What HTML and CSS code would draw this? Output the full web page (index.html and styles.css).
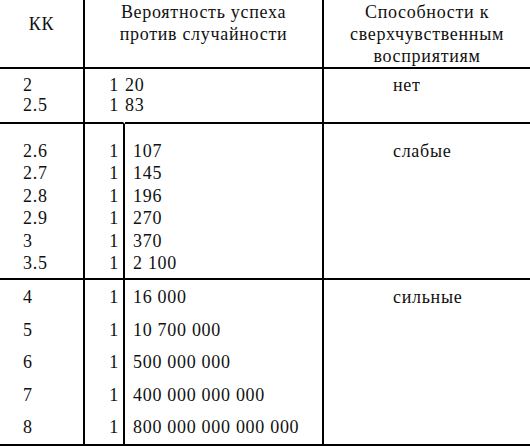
FILE: index.html
```html
<!DOCTYPE html>
<html lang="ru">
<head>
<meta charset="utf-8">
<title>КК</title>
<link rel="stylesheet" href="styles.css">
</head>
<body>
<table class="kk-table">
  <colgroup>
    <col class="c-kk">
    <col class="c-one">
    <col class="c-val">
    <col class="c-abil">
  </colgroup>
  <thead>
    <tr>
      <th class="h-kk">КК</th>
      <th class="h-prob" colspan="2">Вероятность успеха<br>против случайности</th>
      <th class="h-abil">Способности к<br>сверхчувственным<br>восприятиям</th>
    </tr>
  </thead>
  <tbody>
    <tr class="r1">
      <td class="kk">2<br>2.5</td>
      <td class="one one-plain">1<br>1</td>
      <td class="val val-plain">20<br>83</td>
      <td class="abil">нет</td>
    </tr>
    <tr class="r2">
      <td class="kk">2.6<br>2.7<br>2.8<br>2.9<br>3<br>3.5</td>
      <td class="one">1<br>1<br>1<br>1<br>1<br>1</td>
      <td class="val">107<br>145<br>196<br>270<br>370<br>2 100</td>
      <td class="abil">слабые</td>
    </tr>
    <tr class="r3">
      <td class="kk">4<br>5<br>6<br>7<br>8</td>
      <td class="one">1<br>1<br>1<br>1<br>1</td>
      <td class="val">16 000<br>10 700 000<br>500 000 000<br>400 000 000 000<br>800 000 000 000 000</td>
      <td class="abil">сильные</td>
    </tr>
  </tbody>
</table>
</body>
</html>
```

FILE: styles.css
```css
html, body {
  margin: 0;
  padding: 0;
  background: #fff;
  font-family: "Liberation Serif", "DejaVu Serif", serif;
}

.kk-table {
  table-layout: fixed;
  width: 530px;
  border-collapse: separate;
  border-spacing: 0;
  font-family: "Liberation Serif", "DejaVu Serif", serif;
  font-size: 18px;
  letter-spacing: 0.7px;
  color: #111;
}

.c-kk { width: 85px; }
.c-one { width: 40px; }
.c-val { width: 199px; }
.c-abil { width: 206px; }

th, td {
  box-sizing: border-box;
  padding: 0;
  vertical-align: top;
  font-family: inherit;
  font-weight: normal;
  white-space: nowrap;
}

thead th {
  height: 69px;
  border-bottom: 2px solid #000;
  line-height: 22px;
  padding-top: 1px;
  text-align: center;
}

.h-kk {
  border-right: 2px solid #000;
  padding-top: 13px;
}

.h-prob {
  border-right: 2px solid #000;
}

.kk {
  border-right: 2px solid #000;
  padding-left: 23px;
  text-align: left;
}

.one {
  text-align: right;
  padding-right: 4px;
  border-right: 2px solid #000;
}

.one-plain {
  border-right-color: transparent;
}

.val {
  text-align: left;
  padding-left: 8px;
  border-right: 2px solid #000;
}

.val-plain {
  padding-left: 0;
}

.abil {
  text-align: left;
  padding-left: 69px;
}

.r1 td {
  height: 55px;
  line-height: 20px;
  padding-top: 6px;
  border-bottom: 2px solid #000;
}

.r2 td {
  height: 156px;
  line-height: 22.4px;
  padding-top: 16px;
  border-bottom: 2px solid #000;
}

.r3 td {
  height: 165px;
  line-height: 32.5px;
  padding-top: 1px;
  border-bottom: 2px solid #000;
}
```
